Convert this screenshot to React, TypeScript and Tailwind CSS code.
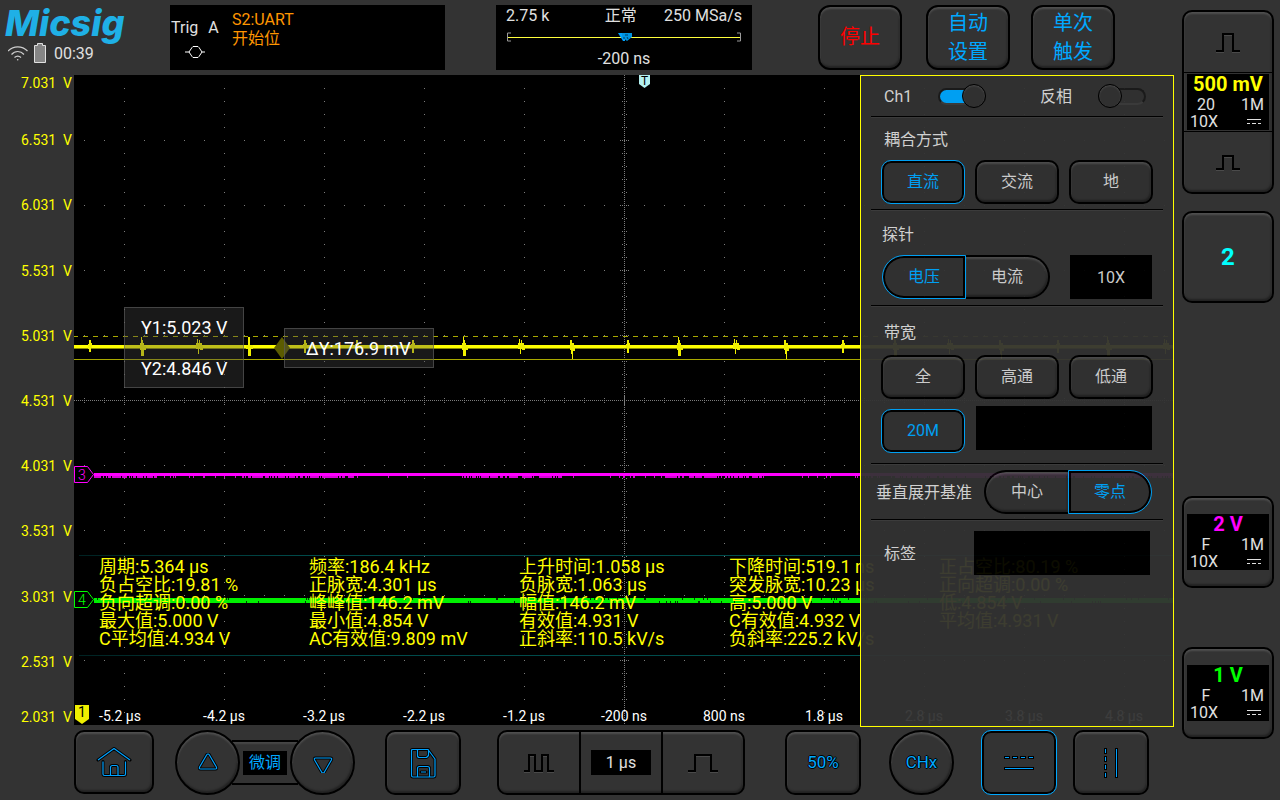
import { type ReactNode } from "react";
import { clsx } from "clsx";

const VOLTS = ["7.031", "6.531", "6.031", "5.531", "5.031", "4.531", "4.031", "3.531", "3.031", "2.531", "2.031"];
const TIMES = ["-5.2 µs", "-4.2 µs", "-3.2 µs", "-2.2 µs", "-1.2 µs", "-200 ns", "800 ns", "1.8 µs", "2.8 µs", "3.8 µs", "4.8 µs"];
const MEASUREMENTS = [
  ["周期:5.364 µs", "负占空比:19.81 %", "负向超调:0.00 %", "最大值:5.000 V", "C平均值:4.934 V"],
  ["频率:186.4 kHz", "正脉宽:4.301 µs", "峰峰值:146.2 mV", "最小值:4.854 V", "AC有效值:9.809 mV"],
  ["上升时间:1.058 µs", "负脉宽:1.063 µs", "幅值:146.2 mV", "有效值:4.931 V", "正斜率:110.5 kV/s"],
  ["下降时间:519.1 ns", "突发脉宽:10.23 µs", "高:5.000 V", "C有效值:4.932 V", "负斜率:225.2 kV/s"],
  ["正占空比:80.19 %", "正向超调:0.00 %", "低:4.854 V", "平均值:4.931 V"],
];

const bevel =
  "border-2 border-black bg-[#333] shadow-[inset_0_2px_2px_rgba(255,255,255,0.14),inset_-1px_-2px_2px_rgba(0,0,0,0.35)]";
const selectedBevel = "border border-[#00a8ff] bg-[#333] shadow-[inset_0_0_0_2px_#000]";

/* ---------- plot drawing ---------- */

function range(n: number) {
  return Array.from({ length: n }, (_, i) => i);
}

function noise(seed: number) {
  const v = Math.sin(seed * 12.9898) * 43758.5453;
  return v - Math.floor(v);
}

function Graticule() {
  const dots: string[] = [];
  const dot = (x: number, y: number) => dots.push(`M${x} ${y}h1v1h-1z`);
  range(11).forEach((c) => {
    if (c !== 5) range(49).forEach((r) => dot(50 + c * 100, 13 + r * 13));
  });
  range(9).forEach((r) => {
    if (r !== 4) range(55).forEach((c) => dot(10 + c * 20, 65 + r * 65));
  });
  range(550).forEach((i) => dot(i * 2, 325));
  range(325).forEach((i) => dot(550, i * 2));
  range(55).forEach((c) => {
    dot(10 + c * 20, 323);
    dot(10 + c * 20, 327);
  });
  range(11).forEach((c) => {
    dot(50 + c * 100, 321);
    dot(50 + c * 100, 329);
  });
  range(49).forEach((r) => {
    dot(548, 13 + r * 13);
    dot(552, 13 + r * 13);
  });
  range(9).forEach((r) => {
    dot(546, 65 + r * 65);
    dot(554, 65 + r * 65);
  });
  return <path d={dots.join("")} fill="#7c7c7c" shapeRendering="crispEdges" />;
}

/* left edge of each burst on channel 1, with the shape it takes */
const SPIKES: [number, number][] = [
  [14, 0], [66, 1], [122, 2], [172, 3], [229, 4], [281, 4], [337, 4], [388, 1], [444, 2], [496, 5],
  [552, 4], [603, 1], [659, 2], [710, 5], [767, 4], [819, 1], [873, 2], [925, 5], [982, 4], [1032, 1], [1089, 2],
];

function spike([x, shape]: [number, number]) {
  const shapes = [
    `M${x} 269h1v-4h2v3h1v5h-1v4h-2v-3h-1z`,
    `M${x} 268h1v-6h1v3h1v3h1v3h2v4h-2v6h-3v-6h-1z`,
    `M${x} 268h1v-4h1v4h1v-3h1v3h2v3h1v4h-3v-1h-1v5h-1v-5h-2z`,
    `M${x} 270h2v-8h2v8h3v4h-2v7h-3v-7h-2z`,
    `M${x} 269h1v-4h2v3h1v5h-1v5h-2v-5h-1z`,
    `M${x} 270v-5h2v3h2v4h1v4h-2v8h-1v-5h-1v-4h-1z`,
  ];
  return shapes[shape];
}

function Traces() {
  const magentaTicks = range(1080)
    .filter((i) => noise(i + 3) < (i < 60 || (i > 150 && i < 260) || (i > 365 && i < 470) || (i > 570 && i < 670) || i > 800 ? 0.75 : 0.1))
    .map((i) => `M${20 + i} 401h1v2h-1z`)
    .join("");
  const greenNotches = range(1080)
    .filter((i) => noise(i + 911) < 0.09)
    .map((i) => `M${20 + i} ${noise(i) > 0.5 ? 523 : 526}h1v2h-1z`)
    .join("");
  return (
    <g shapeRendering="crispEdges">
      <rect x="0" y="270" width="1100" height="4" fill="#8c8c00" />
      <rect x="0" y="270" width="1100" height="3" fill="#ffff00" />
      <path d={SPIKES.map(spike).join("")} fill="#f0f000" />
      <path d="M-1 261.5H1100" stroke="#a8a800" strokeDasharray="5 5" />
      <path d="M0 284.5H1100" stroke="#a8a800" />
      <rect x="20" y="398" width="1080" height="3" fill="#ff00ff" />
      <path d={magentaTicks} fill="#d800d8" />
      <rect x="20" y="523" width="1080" height="5" fill="#00f000" />
      <path d={greenNotches} fill="#003c00" />
    </g>
  );
}

function PlotDrawing() {
  return (
    <svg className="absolute inset-0 h-full w-full" viewBox="0 0 1100 650" preserveAspectRatio="none" aria-hidden="true">
      <defs>
        <linearGradient id="fade" x1="0" x2="1" y1="0" y2="0">
          <stop offset="0" stopColor="#002222" />
          <stop offset="0.2" stopColor="#004a4a" />
          <stop offset="1" stopColor="#005050" />
        </linearGradient>
      </defs>
      <Graticule />
      <rect x="5" y="480" width="1095" height="1" fill="url(#fade)" />
      <rect x="5" y="580" width="1095" height="1" fill="url(#fade)" />
      <Traces />
      <path d="M208 262l8 11-8 11-8-11z" fill="#5c5c00" />
      <path d="M.5 391.5h13l6 8-6 8H.5z" fill="#000" stroke="#ff00ff" />
      <path d="M.5 516.5h13l6 8-6 8H.5z" fill="#000" stroke="#00ff00" />
      <path d="M1 630h14v14l-7 5-7-5z" fill="#f0f000" />
      <path d="M565 0h11v9l-5.500 4-5.500-4z" fill="#b4f0f0" />
    </svg>
  );
}

/* ---------- small drawings ---------- */

function OutlinedIcon({ d, className, viewBox }: { d: string; className: string; viewBox: string }) {
  return (
    <svg className={className} viewBox={viewBox} fill="none" strokeLinejoin="round" aria-hidden="true">
      <path d={d} stroke="#000" strokeWidth="3" strokeLinecap="round" />
      <path d={d} stroke="#00a2ff" strokeWidth="1.200" />
    </svg>
  );
}

function Pulse({ d, className, viewBox }: { d: string; className: string; viewBox: string }) {
  return (
    <svg className={className} viewBox={viewBox} fill="none" aria-hidden="true">
      <path d={d} stroke="#4a4a4a" strokeWidth="2" transform="translate(0 1)" />
      <path d={d} stroke="#000" strokeWidth="2" />
    </svg>
  );
}

function DcMark() {
  return (
    <svg className="h-[6px] w-[14px]" viewBox="0 0 14 6" aria-hidden="true" shapeRendering="crispEdges">
      <path d="M0 .5h14M0 4.500h3M5 4.500h4M11 4.500h3" stroke="#e0e0e0" />
    </svg>
  );
}

/* ---------- controls ---------- */

function HeaderButton({ children, color = "text-[#00a8ff]" }: { children: ReactNode; color?: string }) {
  return (
    <button type="button" className={clsx(bevel, "h-[65px] w-[84px] rounded-xl text-[20px] leading-[29px]", color)}>
      {children}
    </button>
  );
}

function OptionButton({ children, selected }: { children: ReactNode; selected?: boolean }) {
  return (
    <button
      type="button"
      aria-pressed={!!selected}
      className={clsx("h-11 w-[84px] rounded-[10px] text-base", selected ? selectedBevel : bevel, selected ? "text-[#00a8ff]" : "text-[#d6d6d6]")}
    >
      {children}
    </button>
  );
}

function Segmented({ options, active, label }: { options: [string, string]; active: 0 | 1; label: string }) {
  return (
    <div role="group" aria-label={label} className="flex">
      {options.map((option, i) => (
        <button
          key={option}
          type="button"
          aria-pressed={i === active}
          className={clsx(
            "h-11 w-[84px] text-base",
            i === 0 ? "rounded-l-full" : "rounded-r-full",
            i === active ? selectedBevel : bevel,
            i === active ? "text-[#00a8ff]" : "text-[#d6d6d6]",
            i !== active && (i === 0 ? "border-r-0" : "border-l-0"),
          )}
        >
          {option}
        </button>
      ))}
    </div>
  );
}

function Toggle({ id, on }: { id: string; on?: boolean }) {
  return (
    <span className="relative flex h-6 w-12 items-center">
      <input id={id} type="checkbox" role="switch" defaultChecked={on} className="peer absolute inset-0 z-[1] size-full opacity-0" />
      <span className="h-[17px] w-full rounded-full border-2 border-[#1c1c1c] border-b-[#3e3e3e] bg-[#333] peer-checked:bg-[#00a8ff]" />
      <span className="absolute left-0 size-6 rounded-full border border-black bg-[#333] shadow-[inset_0_1px_2px_rgba(255,255,255,0.15)] peer-checked:right-0 peer-checked:left-auto" />
    </span>
  );
}

function Divider() {
  return <hr className="mx-[10px] h-[2px] border-t border-b border-t-black border-b-[#3f3f3f]" />;
}

function BlackField({ id, label, value, className }: { id: string; label?: string; value?: string; className: string }) {
  return (
    <input
      id={id}
      type="text"
      aria-label={label}
      defaultValue={value}
      className={clsx("h-11 rounded-none bg-black text-center text-base text-[#d6d6d6] outline-none", className)}
    />
  );
}

function ChannelReadout({ scale, limit, color }: { scale: string; limit: string; color: string }) {
  return (
    <span className="grid w-[82px] grid-cols-2 bg-black text-base leading-[18px] text-[#e0e0e0]">
      <span className={clsx("col-span-2 text-center text-[20px] leading-5 font-bold", color)}>{scale}</span>
      <span className="pr-[3px] pt-px text-center leading-[19px]">{limit}</span>
      <span className="pt-px pr-[5px] text-right leading-[19px]">1M</span>
      <span className="pl-[3px] text-left leading-4">10X</span>
      <span className="flex items-center justify-end pr-2">
        <DcMark />
      </span>
    </span>
  );
}

const railButton = "flex h-[92px] w-[92px] items-center justify-center rounded-[10px]";

function ChannelRail() {
  return (
    <aside className="flex w-[106px] shrink-0 flex-col items-start pt-[10px] pl-2">
      <div className={clsx(bevel, "flex w-[92px] flex-col rounded-[10px]")}>
        <button type="button" aria-label="Ch1 +" className="flex h-[60px] items-center justify-center pt-[2px]">
          <Pulse className="h-5 w-6" viewBox="0 0 24 20" d="M0 18h7V1h10v17h7" />
        </button>
        <button type="button" className="flex justify-center border-y border-black py-px">
          <ChannelReadout scale="500 mV" limit="20" color="text-[#ffff00]" />
        </button>
        <button type="button" aria-label="Ch1 -" className="flex h-[60px] items-center justify-center pt-[2px]">
          <Pulse className="h-4 w-6" viewBox="0 0 24 16" d="M0 14h7V1h10v13h7" />
        </button>
      </div>
      <button type="button" className={clsx(bevel, railButton, "mt-[17px] text-[24px] font-bold text-[#00ffff]")}>
        2
      </button>
      <button type="button" className={clsx(bevel, railButton, "mt-[193px]")}>
        <ChannelReadout scale="2 V" limit="F" color="text-[#ff00ff]" />
      </button>
      <button type="button" className={clsx(bevel, railButton, "mt-[59px]")}>
        <ChannelReadout scale="1 V" limit="F" color="text-[#00ff00]" />
      </button>
    </aside>
  );
}

function Header() {
  return (
    <header className="flex h-[75px] shrink-0 text-[#e0e0e0]">
      <div className="w-[170px] shrink-0 pt-1 pl-[5px]">
        <h1 className="font-[Inter,sans-serif] text-[36px] leading-[38px] font-extrabold text-[#1fb0e6] italic">Micsig</h1>
        <div className="flex h-[22px] items-center pl-[3px]">
          <svg className="h-4 w-5" viewBox="0 0 20 16" fill="none" stroke="#d0d0d0" strokeWidth="1.200" aria-hidden="true">
            <path d="M0 6C5.500.5 14 .5 19.500 6M3.500 9.500c3.500-4 9-4 12.500 0M6.500 12.500c2-1.800 4.500-1.800 6.500 0" />
            <circle cx="9.700" cy="14.800" r=".8" fill="#d0d0d0" stroke="none" />
          </svg>
          <svg className="ml-[6px] h-5 w-3" viewBox="0 0 12 20" aria-hidden="true">
            <path d="M.5 2.500h3v-2h5v2h3v17H.5z" fill="#858585" stroke="#e0e0e0" />
          </svg>
          <span className="ml-2 pt-[2px] text-base leading-[22px]">00:39</span>
        </div>
      </div>

      <section aria-label="Trigger" className="mt-[5px] flex h-[65px] w-[275px] shrink-0 bg-black text-base leading-[19px]">
        <div className="w-[62px] pt-[13px] pl-px">
          <div className="flex gap-[10px]">
            <span>Trig</span>
            <span>A</span>
          </div>
          <svg className="ml-[14px] mt-[9px] h-3 w-5" viewBox="0 0 20 12" fill="none" stroke="#fff" aria-hidden="true">
            <path d="M0 6h4l3-4.500L8 .5h5l1 1L17 6h3M4 6l3 4.500 1 1h5l1-1L17 6" />
          </svg>
        </div>
        <div className="pt-[5px] text-[#ff9600]">
          <p>S2:UART</p>
          <p>开始位</p>
        </div>
      </section>

      <section aria-label="Acquisition" className="mt-[5px] ml-[51px] flex h-[65px] w-64 shrink-0 flex-col bg-black px-[10px] text-base leading-[21px]">
        <div className="flex justify-between">
          <span>2.75 k</span>
          <span className="pl-7">正常</span>
          <span>250 MSa/s</span>
        </div>
        <svg className="mt-[6px] h-[10px] w-full" viewBox="0 0 236 10" fill="none" aria-hidden="true">
          <path d="M2 5.500h232" stroke="#ffff3c" />
          <path d="M5 1H1.500v8H5M231 1h3.500v8H231" stroke="#9a9a9a" />
          <path d="M112 1h7v8h-2z" fill="#00a2ff" />
          <path d="M116 1h10v4l-5 4-5-4z" fill="#0094e0" />
          <path d="M119 3h3M121 5l1 2M118 5v2" stroke="#003a60" />
        </svg>
        <span className="mt-[6px] text-center">-200 ns</span>
      </section>

      <div className="mt-[5px] ml-[66px] flex">
        <HeaderButton color="text-[#ff0000]">停止</HeaderButton>
        <div className="ml-6 flex gap-[21px]">
          <HeaderButton>
            自动
            <br />
            设置
          </HeaderButton>
          <HeaderButton>
            单次
            <br />
            触发
          </HeaderButton>
        </div>
      </div>
    </header>
  );
}

function ChannelPanel() {
  return (
    <section aria-label="Ch1" className="absolute top-0 right-0 -bottom-[2px] z-10 w-[314px] border border-[#ffff00]">
      <div className="h-full bg-[#333] text-base text-[#dcdcdc] opacity-95">
        <div className="flex h-10 items-center pl-[23px]">
          <label htmlFor="ch1-enable" className="w-[54px] pt-px">
            Ch1
          </label>
          <Toggle id="ch1-enable" on />
          <label htmlFor="ch1-invert" className="ml-[54px] w-[58px] pt-px">
            反相
          </label>
          <Toggle id="ch1-invert" />
        </div>
        <Divider />
        <div className="px-5 pt-[10px] pb-[5px]">
          <h2 className="mb-2 pl-[3px] leading-6">耦合方式</h2>
          <div className="flex gap-[10px]">
            <OptionButton selected>直流</OptionButton>
            <OptionButton>交流</OptionButton>
            <OptionButton>地</OptionButton>
          </div>
        </div>
        <Divider />
        <div className="pt-3 pr-[21px] pb-[6px] pl-[21px]">
          <h2 className="mb-2 leading-6">探针</h2>
          <div className="flex justify-between">
            <Segmented label="探针" options={["电压", "电流"]} active={0} />
            <BlackField id="probe-ratio" label="探针倍率" value="10X" className="w-[82px]" />
          </div>
        </div>
        <Divider />
        <div className="px-5 pt-[14px] pb-[10px]">
          <h2 className="mb-[10px] pl-[3px] leading-6">带宽</h2>
          <div className="flex gap-[10px]">
            <OptionButton>全</OptionButton>
            <OptionButton>高通</OptionButton>
            <OptionButton>低通</OptionButton>
          </div>
          <div className="mt-[10px] flex gap-[11px]">
            <OptionButton selected>20M</OptionButton>
            <div className="-mt-[3px]">
              <BlackField id="bandwidth-limit" label="带宽频率" className="w-[176px]" />
            </div>
          </div>
        </div>
        <Divider />
        <div className="flex items-center justify-between py-[5px] pr-[21px] pl-[15px]">
          <span className="pt-px">垂直展开基准</span>
          <Segmented label="垂直展开基准" options={["中心", "零点"]} active={1} />
        </div>
        <Divider />
        <div className="flex items-center justify-between px-[23px] py-[10px]">
          <label htmlFor="channel-tag" className="pt-px">
            标签
          </label>
          <BlackField id="channel-tag" className="w-[176px]" />
        </div>
      </div>
    </section>
  );
}

function Plot() {
  return (
    <div className="flex min-h-[650px] flex-1">
      <ul className="flex w-[74px] shrink-0 flex-col pr-[2px] text-right text-[14px] leading-4 text-[#ffff00]">
        {VOLTS.map((v, i) => (
          <li
            key={v}
            className={clsx(
              "flex justify-end whitespace-pre",
              i === 0 ? "flex-[0.5] items-start" : i === 10 ? "flex-[0.5] items-end" : "flex-1 items-center pt-[2px]",
            )}
          >
            {v + "  V"}
          </li>
        ))}
      </ul>
      <div className="relative min-w-0 flex-1 bg-black">
        <PlotDrawing />
        <span className="absolute top-[392px] left-[4px] text-[14px] leading-4 font-light text-[#ff00ff]">3</span>
        <span className="absolute top-[517px] left-[4px] text-[14px] leading-4 font-light text-[#00ff00]">4</span>
        <span className="absolute bottom-[5px] left-[4px] text-[14px] leading-4 text-black">1</span>
        <span className="absolute top-0 left-[567px] text-[12px] leading-3 text-black">T</span>

        <div className="absolute top-[232px] left-[50px] flex h-[81px] w-[120px] flex-col justify-between border border-[#606060]/60 bg-[#494949]/35 pt-[9px] pb-2 pl-4 text-[18px] leading-[21px] text-white">
          <span>Y1:5.023 V</span>
          <span>Y2:4.846 V</span>
        </div>
        <div className="absolute top-[253px] left-[210px] flex h-10 w-[150px] items-center border border-[#606060]/60 bg-[#494949]/35 pl-[21px] text-[18px] text-white">
          ΔY:176.9 mV
        </div>

        <div className="absolute inset-x-0 bottom-[77px] flex pl-[25px] text-[18px] leading-[18px] whitespace-nowrap text-[#ffff00]">
          {MEASUREMENTS.map((column) => (
            <ul key={column[0]} className="w-[210px] shrink-0 last:w-auto last:shrink">
              {column.map((m) => (
                <li key={m}>{m}</li>
              ))}
            </ul>
          ))}
        </div>

        <ul className="absolute inset-x-0 bottom-0 grid grid-cols-11 text-center text-[14px] leading-[18px] text-white">
          {TIMES.map((t) => (
            <li key={t} className="first:pr-2">
              {t}
            </li>
          ))}
        </ul>
        <ChannelPanel />
      </div>
    </div>
  );
}

const toolButton = "flex h-[65px] w-[76px] items-center justify-center rounded-[10px]";
const roundButton = "flex size-[65px] items-center justify-center rounded-full";
const glyphText =
  "text-[17px] text-[#00a8ff] [text-shadow:1px_0_0_#000,-1px_0_0_#000,0_1px_0_#000,0_-1px_0_#000]";

function Toolbar() {
  return (
    <footer className="flex h-[75px] shrink-0 items-start pt-[5px] pl-[74px]">
      <button type="button" aria-label="Home" className={clsx(bevel, "flex h-16 w-20 items-center justify-center rounded-[10px]")}>
        <OutlinedIcon
          className="h-8 w-9"
          viewBox="0 0 36 32"
          d="M2 14L18 2.500L34 14M7 15.500v12.500q0 1.500 1.500 1.500h19.500q1.500 0 1.500-1.500V15.500M14.500 29.500v-8q0-2 2-2h3.500q2 0 2 2v8"
        />
      </button>

      <div role="group" aria-label="微调" className="ml-[21px] flex items-center">
        <button type="button" aria-label="Up" className={clsx(bevel, roundButton, "z-[1]")}>
          <OutlinedIcon className="h-5 w-6" viewBox="0 0 24 20" d="M12 1q1 0 1.400 1l7 12q.8 2-1 2h-14.800q-1.800 0-1-2l7-12q.4-1 1.400-1z" />
        </button>
        <div className="-mx-2 flex h-[45px] items-center border-y-2 border-black bg-[#333] px-[11px] shadow-[inset_0_2px_2px_rgba(255,255,255,0.1)]">
          <span className="w-11 bg-black text-center text-base leading-6 text-[#00a8ff]">微调</span>
        </div>
        <button type="button" aria-label="Down" className={clsx(bevel, roundButton, "z-[1]")}>
          <OutlinedIcon className="h-5 w-6" viewBox="0 0 24 20" d="M12 20q-1 0-1.400-1l-7-12q-.8-2 1-2h14.800q1.800 0 1 2l-7 12q-.4 1-1.400 1z" />
        </button>
      </div>

      <button type="button" aria-label="Save" className={clsx(bevel, toolButton, "ml-[30px]")}>
        <OutlinedIcon
          className="h-8 w-7"
          viewBox="0 0 28 32"
          d="M3.500 2.500H19l7 9.500v16.500q0 1.500-1.500 1.500H4q-1.500 0-1.500-1.500v-25q0-1 1-1zM8.500 2.500v6q0 2 2 2h7l2-2v-6M8.500 30v-8.500q0-2 2-2h8q2 0 2 2V30M12 25h5"
        />
      </button>

      <div role="group" aria-label="Time base" className={clsx(bevel, "ml-9 flex h-[65px] w-[248px] rounded-[10px]")}>
        <button type="button" aria-label="Shorter time base" className="flex flex-1 items-center justify-center border-r-2 border-black">
          <Pulse className="h-5 w-[30px]" viewBox="0 0 30 20" d="M0 18h5V2h6v16h7V2h6v16h6" />
        </button>
        <button type="button" className="flex flex-1 items-center justify-center border-r-2 border-black">
          <span className="w-[60px] bg-black text-base leading-[25px] text-[#e0e0e0]">1 µs</span>
        </button>
        <button type="button" aria-label="Longer time base" className="flex flex-1 items-center justify-center">
          <Pulse className="h-5 w-[30px]" viewBox="0 0 30 20" d="M0 18h7V2h16v16h7" />
        </button>
      </div>

      <button type="button" className={clsx(bevel, toolButton, glyphText, "ml-10")}>
        50%
      </button>
      <button type="button" className={clsx(bevel, roundButton, glyphText, "ml-7")}>
        CHx
      </button>
      <button type="button" aria-label="Horizontal cursors" aria-pressed="true" className={clsx(selectedBevel, toolButton, "ml-[27px]")}>
        <svg className="h-4 w-8" viewBox="0 0 32 16" aria-hidden="true" shapeRendering="crispEdges">
          <path d="M1 1h6v3H1zM9 1h6v3H9zM17 1h6v3h-6zM25 1h6v3h-6zM1 12h30v3H1z" fill="#000" />
          <path d="M2 2h4v1H2zM10 2h4v1h-4zM18 2h4v1h-4zM26 2h4v1h-4zM2 13h28v1H2z" fill="#00a2ff" />
        </svg>
      </button>
      <button type="button" aria-label="Vertical cursors" className={clsx(bevel, toolButton, "ml-4")}>
        <svg className="h-8 w-4" viewBox="0 0 16 32" aria-hidden="true" shapeRendering="crispEdges">
          <path d="M1 1h3v6H1zM1 9h3v6H1zM1 17h3v6H1zM1 25h3v6H1zM12 1h3v30h-3z" fill="#000" />
          <path d="M2 2h1v4H2zM2 10h1v4H2zM2 18h1v4H2zM2 26h1v4H2zM13 2h1v28h-1z" fill="#00a2ff" />
        </svg>
      </button>
    </footer>
  );
}

export default function App() {
  return (
    <div className="flex min-h-screen bg-[#333] font-[Roboto,'Noto_Sans_CJK_SC',sans-serif]" lang="zh-CN">
      <main className="flex min-w-0 flex-1 flex-col">
        <Header />
        <Plot />
        <Toolbar />
      </main>
      <ChannelRail />
    </div>
  );
}
